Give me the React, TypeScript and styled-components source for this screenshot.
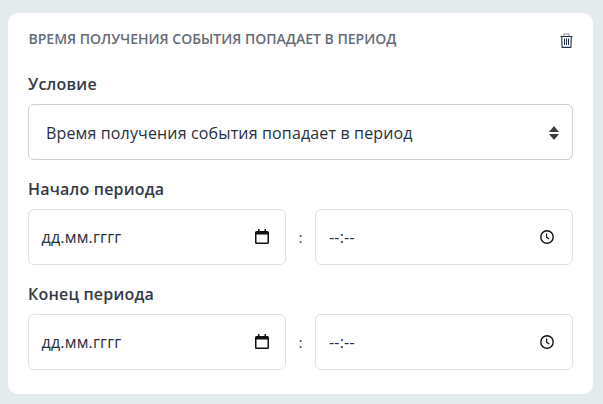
import React from "react";
import styled, { createGlobalStyle } from "styled-components";

const Global = createGlobalStyle`
  html, body { margin: 0; padding: 0; background: #e4ebed; }
  body { font-family: "Open Sans", "Noto Sans", sans-serif; width: 603px; height: 404px; overflow: hidden; }
`;
const Page = styled.div`
  padding: 13px 10px 10px 8px;
  box-sizing: border-box;
  width: 603px;
  height: 404px;
`;
const Card = styled.section`
  background: #fff;
  border-radius: 10px;
  height: 381px;
  box-sizing: border-box;
  padding: 16px 20px 0;
  display: flex;
  flex-direction: column;
`;
const Header = styled.header`
  display: flex;
  justify-content: space-between;
  align-items: center;
  height: 20px;
  margin-bottom: 23px;
`;
const Title = styled.h2`
  margin: 0;
  padding-left: 0.5px;
  font-size: 14px;
  font-weight: 600;
  line-height: 20px;
  color: #666c75;
  text-transform: uppercase;
`;
const IconButton = styled.button`
  border: 0;
  background: none;
  padding: 3px 0 0;
  width: 13px;
  height: 18px;
  display: block;
  color: #1d2f45;
`;
const Label = styled.label`
  display: block;
  font-size: 16px;
  font-weight: 600;
  letter-spacing: 0.2px;
  line-height: 24px;
  color: #343a45;
  margin-bottom: 8px;
`;
const SelectBox = styled.div`
  height: 56px;
  box-sizing: border-box;
  border: 1px solid #cfcfcf;
  border-radius: 6px;
  padding: 1px 13px 0 17px;
  display: flex;
  align-items: center;
  justify-content: space-between;
  font-size: 16px;
  letter-spacing: 0.15px;
  color: #26303d;
  margin-bottom: 17px;
`;
const Row = styled.div`
  display: grid;
  grid-template-columns: 258px 29px 258px;
  margin-bottom: 17px;
`;
const Field = styled.div<{ $end: number; $start: number }>`
  height: 56px;
  box-sizing: border-box;
  border: 1px solid #e0e0e0;
  border-radius: 6px;
  padding: 0 ${(p) => p.$end}px 0 ${(p) => p.$start}px;
  display: flex;
  align-items: center;
  justify-content: space-between;
  font-size: 16px;
  letter-spacing: 0.2px;
  color: #26303d;
`;
const Colon = styled.span`
  display: flex;
  align-items: center;
  justify-content: center;
  font-size: 14px;
  color: #26303d;
`;
const CalendarIcon = styled.svg`
  display: block;
  margin-top: -2px;
`;

const Trash = () => (
  <svg width="13" height="15" viewBox="0 0 13 15" fill="none" stroke="currentColor">
    <path d="M0.5 3.5h12M1.7 3.5l.4 10.9h8.8l.4-10.9" strokeWidth="1.1" />
    <path d="M4 3V1h5v2" strokeWidth="1" stroke="#888" />
    <path d="M4.5 5.5v6.5M6.5 5.5v6.5M8.5 5.5v6.5" strokeWidth="1" />
  </svg>
);
const Sort = () => (
  <svg width="10" height="14" viewBox="0 0 10 14" fill="#3a3a3a">
    <path d="M5 0L10 6H0zM5 14L0 8h10z" />
  </svg>
);
const Calendar = () => (
  <CalendarIcon width="14" height="15" viewBox="0 0 14 15">
    <path d="M3 0h1.5v2h5V0H11v2h1.5A1.5 1.5 0 0 1 14 3.5v10a1.5 1.5 0 0 1-1.5 1.5h-11A1.5 1.5 0 0 1 0 13.5v-10A1.5 1.5 0 0 1 1.5 2H3zM1.5 5.5v8h11v-8z" fill="#111" />
  </CalendarIcon>
);
const Clock = () => (
  <svg width="14" height="14" viewBox="0 0 14 14" fill="none" stroke="#111">
    <circle cx="7" cy="7" r="6.2" strokeWidth="1.4" />
    <path d="M6.6 3.5v3.8l2.6 1.6" strokeWidth="1.2" />
  </svg>
);

const Period = ({ label }: { label: string }) => (
  <>
    <Label>{label}</Label>
    <Row>
      <Field $start={12.5} $end={16.5}>дд.мм.гггг<Calendar /></Field>
      <Colon>:</Colon>
      <Field $start={13} $end={18.5}>--:--<Clock /></Field>
    </Row>
  </>
);

export default function App() {
  return (
    <Page>
      <Global />
      <Card>
        <Header>
          <Title>Время получения события попадает в период</Title>
          <IconButton aria-label="Удалить"><Trash /></IconButton>
        </Header>
        <Label>Условие</Label>
        <SelectBox>Время получения события попадает в период<Sort /></SelectBox>
        <Period label="Начало периода" />
        <Period label="Конец периода" />
      </Card>
    </Page>
  );
}
